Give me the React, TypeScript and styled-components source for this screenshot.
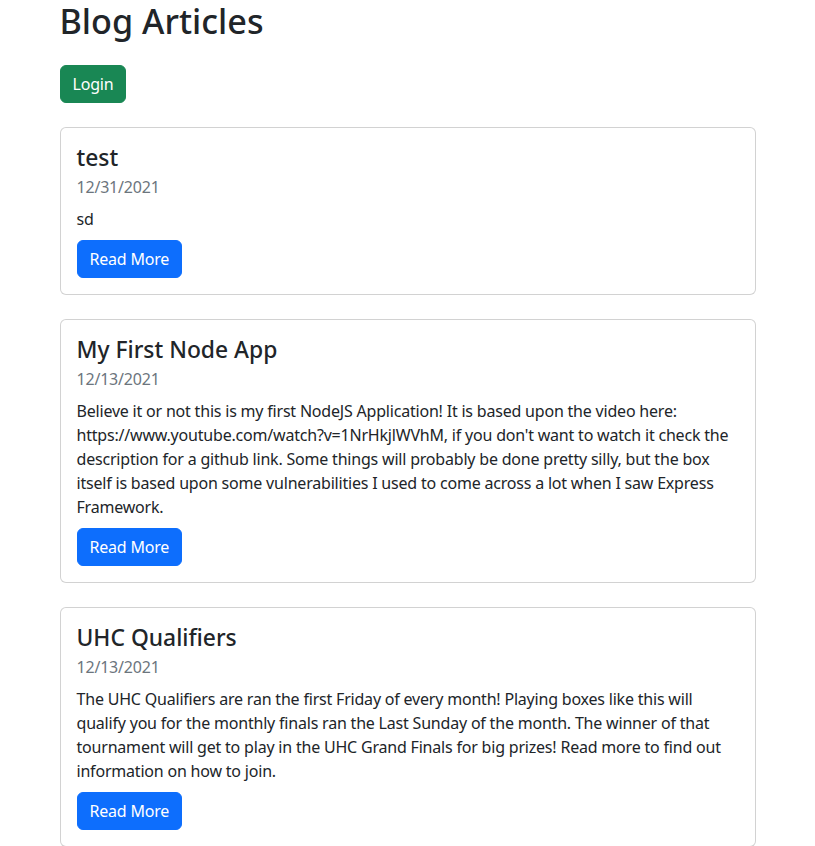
import React from "react";
import styled, { createGlobalStyle } from "styled-components";

const GlobalStyle = createGlobalStyle`
  *, *::before, *::after { box-sizing: border-box; }
  body {
    margin: 0;
    font-family: "Noto Sans", "Open Sans", sans-serif;
    font-size: 16px;
    line-height: 1.5;
    color: #212529;
    background: #fff;
    letter-spacing: -0.2px;
  }
`;

const Container = styled.main`
  width: 100%;
  max-width: 720px;
  margin: 0 auto;
  padding: 0 12px;
  display: flex;
  flex-direction: column;
  align-items: stretch;
`;

const PageTitle = styled.h1`
  margin: 0 0 24px;
  font-size: 34.2px;
  font-weight: 500;
  line-height: 1.2;
  letter-spacing: 0;
`;

const Toolbar = styled.div`
  display: flex;
  margin-bottom: 24px;
`;

const Button = styled.a<{ $variant: "success" | "primary" }>`
  display: inline-block;
  padding: 6px 12px;
  font-size: 16px;
  line-height: 24px;
  font-weight: 400;
  color: #fff;
  text-decoration: none;
  border-radius: 6px;
  border: 1px solid ${p => (p.$variant === "success" ? "#198754" : "#0d6efd")};
  background: ${p => (p.$variant === "success" ? "#198754" : "#0d6efd")};
  cursor: pointer;
  align-self: flex-start;
`;

const CardList = styled.section`
  display: flex;
  flex-direction: column;
  gap: 24px;
`;

const Card = styled.article`
  border: 1px solid rgba(0, 0, 0, 0.175);
  border-radius: 6px;
  background: #fff;
`;

const CardBody = styled.div`
  padding: 16px;
  display: flex;
  flex-direction: column;
`;

const CardTitle = styled.h4`
  margin: 0 0 8px;
  font-size: 22.85px;
  font-weight: 500;
  line-height: 1.2;
  letter-spacing: 0;
`;

const CardDate = styled.div`
  margin: -4px 0 8px;
  color: #6c757d;
  line-height: 24px;
`;

const CardText = styled.p`
  margin: 0 0 8.5px;
  line-height: 24px;
`;

type Post = { title: string; date: string; body: string };

const posts: Post[] = [
  { title: "test", date: "12/31/2021", body: "sd" },
  {
    title: "My First Node App",
    date: "12/13/2021",
    body:
      "Believe it or not this is my first NodeJS Application! It is based upon the video here: https://www.youtube.com/watch?v=1NrHkjlWVhM, if you don't want to watch it check the description for a github link. Some things will probably be done pretty silly, but the box itself is based upon some vulnerabilities I used to come across a lot when I saw Express Framework.",
  },
  {
    title: "UHC Qualifiers",
    date: "12/13/2021",
    body:
      "The UHC Qualifiers are ran the first Friday of every month! Playing boxes like this will qualify you for the monthly finals ran the Last Sunday of the month. The winner of that tournament will get to play in the UHC Grand Finals for big prizes! Read more to find out information on how to join.",
  },
];

export default function App() {
  return (
    <>
      <GlobalStyle />
      <Container>
        <PageTitle>Blog Articles</PageTitle>
        <Toolbar>
          <Button $variant="success" href="#login">Login</Button>
        </Toolbar>
        <CardList>
          {posts.map(p => (
            <Card key={p.title}>
              <CardBody>
                <CardTitle>{p.title}</CardTitle>
                <CardDate>{p.date}</CardDate>
                <CardText>{p.body}</CardText>
                <Button $variant="primary" href="#read">Read More</Button>
              </CardBody>
            </Card>
          ))}
        </CardList>
      </Container>
    </>
  );
}
